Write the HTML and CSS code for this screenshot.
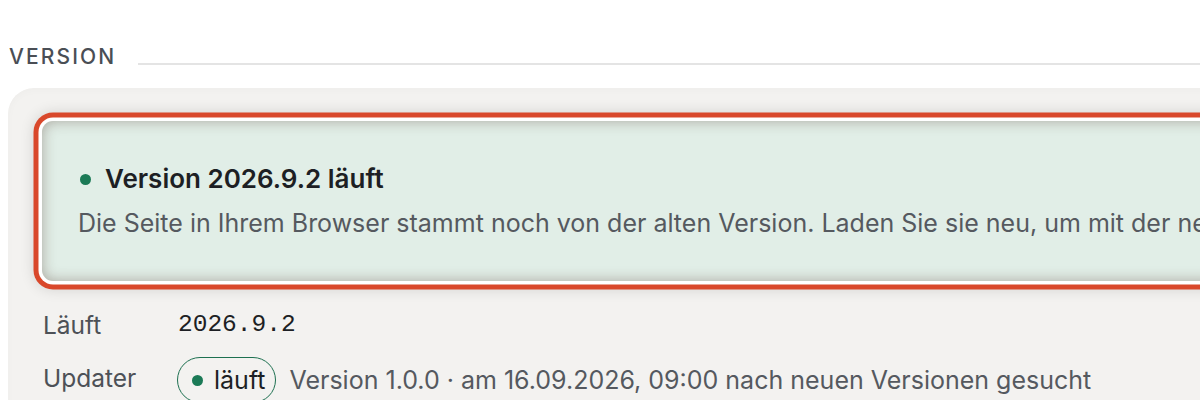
FILE: index.html
```html
<!DOCTYPE html>
<html lang="de">
<head>
<meta charset="utf-8">
<title>Version</title>
<link rel="stylesheet" href="styles.css">
</head>
<body>
<section class="section">
  <div class="section-head">
    <h2 class="section-title">VERSION</h2>
    <div class="section-rule"></div>
  </div>
  <div class="card">
    <div class="banner">
      <div class="banner-title"><span class="dot"></span>Version 2026.9.2 läuft</div>
      <p class="banner-text">Die Seite in Ihrem Browser stammt noch von der alten Version. Laden Sie sie neu, um mit der neuen Version zu arbeiten.</p>
    </div>
    <dl class="facts">
      <dt class="fact-label">Läuft</dt>
      <dd class="fact-value mono">2026.9.2</dd>
      <dt class="fact-label updater">Updater</dt>
      <dd class="fact-value"><span class="pill"><span class="dot small"></span>läuft</span><span class="meta">Version 1.0.0 · am 16.09.2026, 09:00 nach neuen Versionen gesucht</span></dd>
    </dl>
  </div>
</section>
</body>
</html>
```

FILE: styles.css
```css
html, body {
  margin: 0;
  padding: 0;
  background: #ffffff;
  overflow: hidden;
}
body {
  font-family: "Inter", "Noto Sans", sans-serif;
  color: #1d1f24;
}
.section {
  width: 1700px;
  padding: 43px 0 0 8px;
}
.section-head {
  display: flex;
  align-items: flex-end;
  gap: 22px;
  margin-right: 500px;
}
.section-title {
  margin: 0 0 0 1px;
  font-size: 21px;
  font-weight: 500;
  letter-spacing: 0.1em;
  color: #4a4e55;
  line-height: 28px;
}
.section-rule {
  flex: 1;
  height: 2px;
  background: #e4e4e4;
  margin-bottom: 6px;
}
.card {
  margin-top: 17px;
  background: #f3f2f0;
  border-radius: 26px;
  padding: 33px 34px 40px 34px;
  box-shadow: inset 0 2px 8px rgba(0, 0, 0, 0.025);
}
.banner {
  background: #e1eee7;
  border-radius: 11px;
  padding: 43px 36px 42px 36px;
  box-shadow:
    inset 0 0 14px rgba(80, 50, 40, 0.38),
    0 0 0 3.5px #ffffff,
    0 0 0 8.5px #d9482b,
    0 0 14px 9px rgba(0, 0, 0, 0.12);
}
.banner-title {
  display: flex;
  align-items: center;
  font-size: 26px;
  font-weight: 600;
  color: #1d1f24;
  line-height: 30px;
}
.dot {
  width: 11px;
  height: 11px;
  border-radius: 50%;
  background: #1b7a56;
  margin-right: 14px;
  margin-left: 2px;
  flex: none;
}
.banner-text {
  margin: 13px 0 0 0;
  font-size: 25px;
  line-height: 32px;
  color: #55595f;
  white-space: nowrap;
}
.facts {
  display: grid;
  grid-template-columns: 135px auto;
  row-gap: 15px;
  margin: 27px 0 0 1px;
  align-items: center;
}
.fact-label {
  font-size: 24.5px;
  color: #4d5157;
  line-height: 34px;
}
.fact-label.updater {
  margin-top: -5px;
}
.fact-value {
  margin: 0;
  font-size: 25px;
  color: #55595f;
  display: flex;
  align-items: center;
  line-height: 34px;
}
.mono {
  font-family: "Liberation Mono", "DejaVu Sans Mono", monospace;
  font-size: 24.5px;
  color: #1d1f24;
}
.pill {
  display: inline-flex;
  align-items: center;
  border: 1.5px solid #1d7050;
  border-radius: 999px;
  padding: 5px 10px 5px 13px;
  color: #1d1f24;
  margin-right: 13px;
  margin-left: -1px;
}
.dot.small {
  width: 11px;
  height: 11px;
  margin: 0 11px 0 1px;
}
```
